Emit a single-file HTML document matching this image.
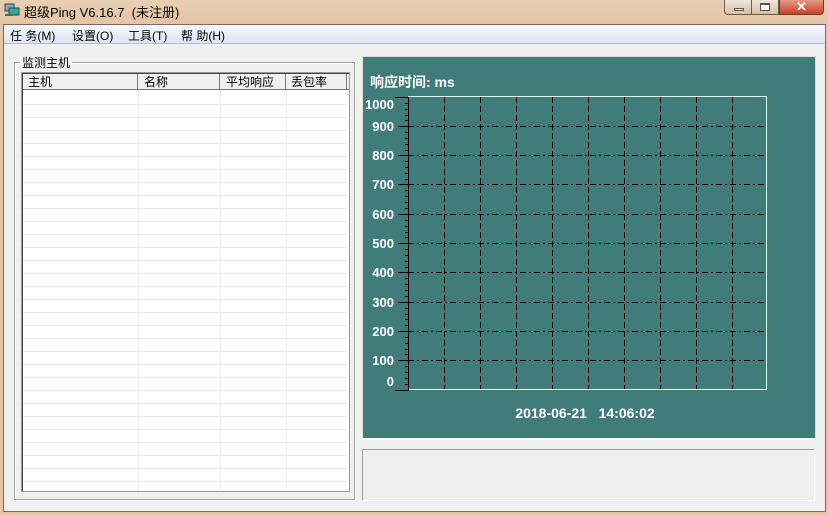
<!DOCTYPE html>
<html><head><meta charset="utf-8"><style>
*{margin:0;padding:0;box-sizing:border-box}
body{width:828px;height:515px;overflow:hidden;background:#e6c6a6;font-family:"Liberation Sans","Noto Sans CJK SC",sans-serif;font-size:12px;color:#000;position:relative}
.abs{position:absolute}
</style></head><body>
<div class="abs" style="left:0;top:0;width:828px;height:26px;background:linear-gradient(#e9cfb2,#e3c3a2)"></div>
<div class="abs" style="left:4px;top:3px;width:16px;height:14px;">
<svg width="16" height="14"><rect x="1" y="1" width="9" height="7" fill="#8ab" stroke="#345"/><rect x="5" y="5" width="10" height="7" fill="#3a9" stroke="#345"/><rect x="1" y="11" width="8" height="2" fill="#567"/></svg></div>
<div class="abs" style="left:24px;top:2px;font-size:13px">超级Ping V6.16.7&nbsp;&nbsp;(未注册)</div>
<div class="abs" style="left:724px;top:0;width:28px;height:15px;border:1px solid #6a5a4a;border-top:none;border-radius:0 0 0 4px;background:linear-gradient(#f2e4d6,#d6bfa8)"><div class="abs" style="left:9px;top:8px;width:10px;height:3px;border:1px solid #555;background:#fff"></div></div>
<div class="abs" style="left:752px;top:0;width:27px;height:15px;border:1px solid #6a5a4a;border-top:none;border-left:none;background:linear-gradient(#f2e4d6,#d6bfa8)"><div class="abs" style="left:8px;top:3px;width:10px;height:8px;border:1px solid #555;border-top-width:2px;background:#fff"></div></div>
<div class="abs" style="left:779px;top:0;width:45px;height:15px;border:1px solid #6a3a2a;border-top:none;border-radius:0 0 4px 0;background:linear-gradient(#e59a88,#c8402a);color:#fff;font-weight:bold;font-size:13px;text-align:center;line-height:13px">✕</div>
<div class="abs" style="left:3px;top:24px;width:823px;height:488px;background:#f0f0f0;border:1px solid #7a6a5a"></div>
<div class="abs" style="left:4px;top:25px;width:821px;height:19px;background:linear-gradient(#f6f8fc,#dde4f2);border-bottom:1px solid #b8bccc"></div>
<div class="abs" style="left:10px;top:27px;font-size:12px;word-spacing:0">任 务(M)</div>
<div class="abs" style="left:72px;top:27px">设置(O)</div>
<div class="abs" style="left:128px;top:27px">工具(T)</div>
<div class="abs" style="left:181px;top:27px">帮 助(H)</div>
<div class="abs" style="left:14px;top:62px;width:341px;height:438px;border:1px solid #a0a0a0;box-shadow:inset 1px 1px 0 #fff,1px 1px 0 #fff"></div>
<div class="abs" style="left:20px;top:54px;background:#f0f0f0;padding:0 2px">监测主机</div>
<svg class="abs" style="left:21px;top:72px" width="329" height="420">
<rect x="0" y="0" width="329" height="420" fill="#fff"/>
<rect x="0" y="0" width="329" height="17" fill="#f0f0f0"/>
<g stroke="#ececec"><line x1="117.5" y1="17" x2="117.5" y2="419"/><line x1="199.5" y1="17" x2="199.5" y2="419"/><line x1="265.5" y1="17" x2="265.5" y2="419"/></g>
<g stroke="#e8e8e8">
<line x1="2" x2="326" y1="32.5" y2="32.5"/><line x1="2" x2="326" y1="45.5" y2="45.5"/><line x1="2" x2="326" y1="58.5" y2="58.5"/><line x1="2" x2="326" y1="71.5" y2="71.5"/><line x1="2" x2="326" y1="84.5" y2="84.5"/><line x1="2" x2="326" y1="97.5" y2="97.5"/><line x1="2" x2="326" y1="110.5" y2="110.5"/><line x1="2" x2="326" y1="123.5" y2="123.5"/><line x1="2" x2="326" y1="136.5" y2="136.5"/><line x1="2" x2="326" y1="149.5" y2="149.5"/><line x1="2" x2="326" y1="162.5" y2="162.5"/><line x1="2" x2="326" y1="175.5" y2="175.5"/><line x1="2" x2="326" y1="188.5" y2="188.5"/><line x1="2" x2="326" y1="201.5" y2="201.5"/><line x1="2" x2="326" y1="214.5" y2="214.5"/><line x1="2" x2="326" y1="227.5" y2="227.5"/><line x1="2" x2="326" y1="240.5" y2="240.5"/><line x1="2" x2="326" y1="253.5" y2="253.5"/><line x1="2" x2="326" y1="266.5" y2="266.5"/><line x1="2" x2="326" y1="279.5" y2="279.5"/><line x1="2" x2="326" y1="292.5" y2="292.5"/><line x1="2" x2="326" y1="305.5" y2="305.5"/><line x1="2" x2="326" y1="318.5" y2="318.5"/><line x1="2" x2="326" y1="331.5" y2="331.5"/><line x1="2" x2="326" y1="344.5" y2="344.5"/><line x1="2" x2="326" y1="357.5" y2="357.5"/><line x1="2" x2="326" y1="370.5" y2="370.5"/><line x1="2" x2="326" y1="383.5" y2="383.5"/><line x1="2" x2="326" y1="396.5" y2="396.5"/><line x1="2" x2="326" y1="409.5" y2="409.5"/></g>
<g stroke="#777"><line x1="116.5" y1="1" x2="116.5" y2="17"/><line x1="198.5" y1="1" x2="198.5" y2="17"/><line x1="264.5" y1="1" x2="264.5" y2="17"/><line x1="325.5" y1="1" x2="325.5" y2="17"/><line x1="0" y1="17.5" x2="329" y2="17.5"/></g>
<rect x="0.5" y="0.5" width="328" height="419" fill="none" stroke="#999"/>
<line x1="1.5" y1="1" x2="1.5" y2="419" stroke="#444"/>
<line x1="1" y1="1.5" x2="328" y2="1.5" stroke="#444"/>
<g font-size="12" font-family="Liberation Sans,Noto Sans CJK SC,sans-serif"><text x="7" y="14">主机</text><text x="123" y="14">名称</text><text x="205" y="14">平均响应</text><text x="270" y="14">丢包率</text></g>
</svg>
<svg class="abs" style="left:362px;top:56px" width="454" height="384" font-family="Liberation Sans,sans-serif">
<rect x="0.5" y="0.5" width="453" height="383" fill="#407d7a" stroke="#ddd"/>
<line x1="0" y1="383" x2="454" y2="383" stroke="#fff" stroke-width="2"/>
<text x="8" y="31" fill="#fff" font-size="14" font-weight="bold" font-family="Liberation Sans,Noto Sans CJK SC,sans-serif">响应时间: ms</text>
<rect x="46.5" y="40.5" width="358" height="293" fill="none" stroke="#dfe" />
<g stroke="#000" stroke-dasharray="6,3,2,3">
<line x1="46" x2="404" y1="70.5" y2="70.5"/><line x1="46" x2="404" y1="99.5" y2="99.5"/><line x1="46" x2="404" y1="128.5" y2="128.5"/><line x1="46" x2="404" y1="158.5" y2="158.5"/><line x1="46" x2="404" y1="187.5" y2="187.5"/><line x1="46" x2="404" y1="216.5" y2="216.5"/><line x1="46" x2="404" y1="246.5" y2="246.5"/><line x1="46" x2="404" y1="275.5" y2="275.5"/><line x1="46" x2="404" y1="304.5" y2="304.5"/></g>
<g stroke="#000" stroke-dasharray="6,3">
<line y1="41" y2="333" x1="82.5" x2="82.5"/><line y1="41" y2="333" x1="118.5" x2="118.5"/><line y1="41" y2="333" x1="154.5" x2="154.5"/><line y1="41" y2="333" x1="190.5" x2="190.5"/><line y1="41" y2="333" x1="226.5" x2="226.5"/><line y1="41" y2="333" x1="262.5" x2="262.5"/><line y1="41" y2="333" x1="298.5" x2="298.5"/><line y1="41" y2="333" x1="334.5" x2="334.5"/><line y1="41" y2="333" x1="370.5" x2="370.5"/></g>
<line x1="46.5" y1="41" x2="46.5" y2="334" stroke="#000"/>
<line x1="33" y1="41.5" x2="46" y2="41.5" stroke="#000"/>
<line x1="33" y1="334.5" x2="47" y2="334.5" stroke="#000"/>
<g stroke="#000">
<path d="M43 47.5h4M43 53.5h4M43 59.5h4M43 64.5h4M43 76.5h4M43 82.5h4M43 88.5h4M43 94.5h4M43 105.5h4M43 111.5h4M43 117.5h4M43 123.5h4M43 134.5h4M43 140.5h4M43 146.5h4M43 152.5h4M43 164.5h4M43 170.5h4M43 176.5h4M43 181.5h4M43 193.5h4M43 199.5h4M43 205.5h4M43 211.5h4M43 222.5h4M43 228.5h4M43 234.5h4M43 240.5h4M43 252.5h4M43 258.5h4M43 263.5h4M43 269.5h4M43 281.5h4M43 287.5h4M43 293.5h4M43 298.5h4M43 310.5h4M43 316.5h4M43 322.5h4M43 328.5h4"/>
<path d="M36 70.5h10M36 99.5h10M36 128.5h10M36 158.5h10M36 187.5h10M36 216.5h10M36 246.5h10M36 275.5h10M36 304.5h10"/></g>
<g fill="#fff" font-size="13" font-weight="bold" text-anchor="end">
<text x="32" y="53">1000</text><text x="32" y="75">900</text><text x="32" y="104">800</text><text x="32" y="133">700</text><text x="32" y="163">600</text><text x="32" y="192">500</text><text x="32" y="221">400</text><text x="32" y="251">300</text><text x="32" y="280">200</text><text x="32" y="309">100</text><text x="32" y="330">0</text></g>
<text x="223" y="362" fill="#fff" font-size="14" font-weight="bold" text-anchor="middle">2018-06-21&nbsp;&nbsp; 14:06:02</text>
</svg>
<div class="abs" style="left:362px;top:449px;width:453px;height:52px;border:1px solid #a0a0a0;border-right-color:#fff;border-bottom-color:#fff;background:#efefef"></div>
</body></html>
